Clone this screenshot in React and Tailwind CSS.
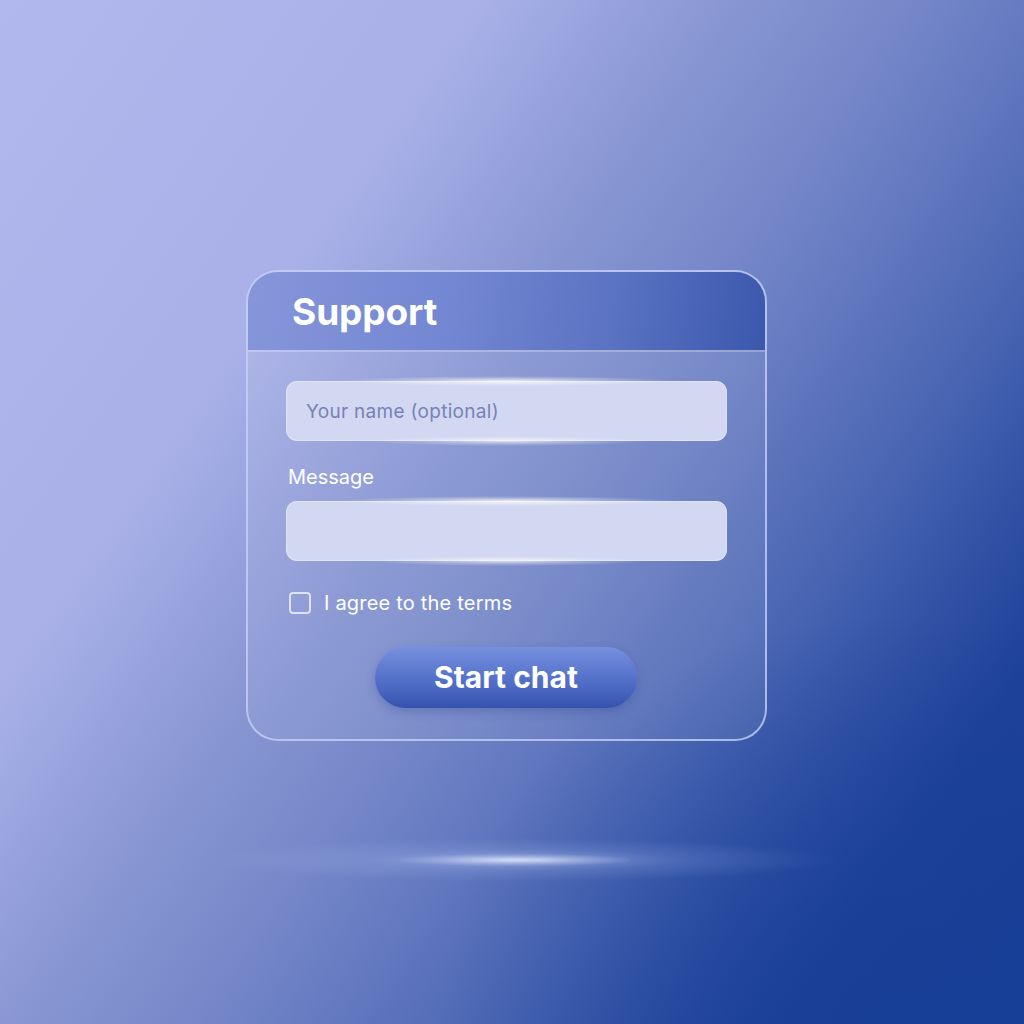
import { useState } from 'react';

const font = { fontFamily: 'Inter, "Open Sans", sans-serif' };

function GlowField({ placeholder }) {
  return (
    <div className="relative">
      <input
        placeholder={placeholder}
        className="relative block h-[60px] w-full rounded-[11px] border border-white/30 bg-[#d2d8f1] px-[19px] text-[19px] tracking-[0.3px] text-[#4a5590] outline-none placeholder:text-[#7882b6]"
      />
      <div className="pointer-events-none absolute left-[50px] right-[50px] -top-[5px] h-[10px] bg-[radial-gradient(ellipse_at_center,rgba(255,255,255,0.8)_0%,rgba(255,255,255,0.3)_40%,rgba(255,255,255,0)_70%)]" />
      <div className="pointer-events-none absolute left-[80px] right-[80px] -bottom-[5px] h-[10px] bg-[radial-gradient(ellipse_at_center,rgba(255,255,255,0.7)_0%,rgba(255,255,255,0.25)_40%,rgba(255,255,255,0)_70%)]" />
    </div>
  );
}

export default function App() {
  const [agreed, setAgreed] = useState(false);

  return (
    <div
      className="relative h-[1024px] w-[1024px] overflow-hidden bg-[linear-gradient(125deg,#b0b8ee_0%,#a8b0e7_28%,#8896d3_42%,#7688c9_52%,#6479c0_60%,#4a66b3_70%,#3252a6_78%,#1d4198_86%,#173e96_100%)]"
      style={font}
    >
      <div className="pointer-events-none absolute inset-0 bg-[radial-gradient(ellipse_45%_40%_at_88%_100%,rgba(23,62,150,0.8)_0%,rgba(23,62,150,0.35)_50%,rgba(23,62,150,0)_100%)]" />

      {/* glow streak near the bottom */}
      <div className="pointer-events-none absolute left-[200px] top-[838px] h-[44px] w-[640px] bg-[radial-gradient(ellipse_at_center,rgba(190,205,245,0.5)_0%,rgba(170,190,240,0.18)_35%,rgba(160,180,235,0)_70%)]" />
      <div className="pointer-events-none absolute left-[400px] top-[854px] h-[12px] w-[230px] bg-[radial-gradient(ellipse_at_center,rgba(225,232,252,0.85)_0%,rgba(210,220,250,0.3)_45%,rgba(200,215,250,0)_75%)]" />

      <div className="relative ml-[246px] pt-[270px]">
        <div className="w-[521px] overflow-hidden rounded-[32px] border-2 border-[#c6d0f5]/80 bg-white/[0.07]">
          <div className="flex h-[78px] items-center bg-[linear-gradient(100deg,#8696da_0%,#7386d2_40%,#5a73c2_70%,#3b58ad_100%)] px-[44px]">
            <h1 className="text-[37px] font-bold leading-none tracking-[-0.1px] text-white">Support</h1>
          </div>
          <div className="h-[2px] bg-white/25" />

          <div className="flex flex-col px-[38px] pb-[31px] pt-[29px]">
            <GlowField placeholder="Your name (optional)" />

            <label className="mt-[26px] pl-[2px] text-[20px] leading-none text-white">Message</label>
            <div className="mt-[14px]">
              <GlowField placeholder="" />
            </div>

            <label className="mt-[27px] flex items-center gap-[13px] pl-[3px] text-[20px] tracking-[0.2px] text-white">
              <input
                type="checkbox"
                checked={agreed}
                onChange={(e) => setAgreed(e.target.checked)}
                className="h-[22px] w-[22px] appearance-none rounded-[4px] border-2 border-white/70 bg-transparent"
              />
              I agree to the terms
            </label>

            <button className="ml-[89px] mt-[29px] h-[61px] w-[262px] rounded-full bg-[linear-gradient(180deg,#7690de_0%,#5673cc_50%,#3552ae_100%)] text-[30px] font-bold text-white shadow-[0_4px_10px_rgba(30,50,130,0.25)]">
              Start chat
            </button>
          </div>
        </div>
      </div>
    </div>
  );
}
